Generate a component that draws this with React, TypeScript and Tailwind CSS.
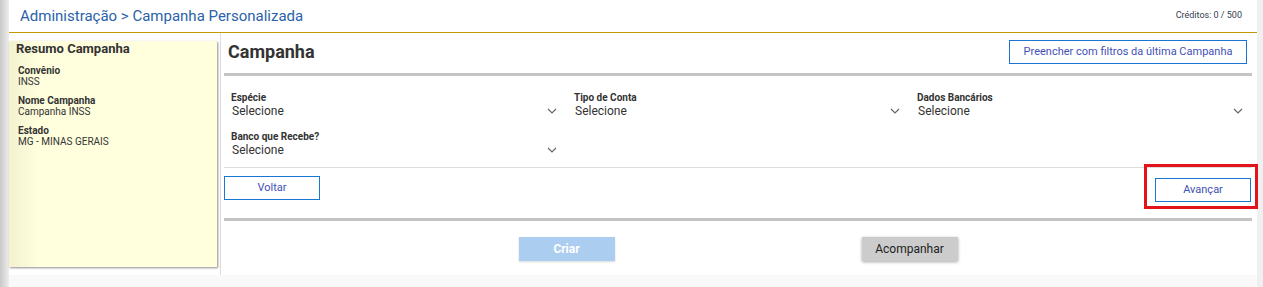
import React from "react";

// campos do filtro da campanha
const fields = [
  { label: "Espécie" },
  { label: "Tipo de Conta" },
  { label: "Dados Bancários" },
  { label: "Banco que Recebe?" },
];

// resumo mostrado no painel amarelo
const resumo = [
  { label: "Convênio", value: "INSS" },
  { label: "Nome Campanha", value: "Campanha INSS" },
  { label: "Estado", value: "MG - MINAS GERAIS" },
];

function Chevron() {
  return (
    <svg width="10" height="6" viewBox="0 0 10 6" className="shrink-0">
      <path d="M1 1l4 4 4-4" fill="none" stroke="#666" strokeWidth="1.2" />
    </svg>
  );
}

export default function App() {
  return (
    <div className="w-[1263px] h-[287px] flex bg-[#f9f9f9] font-['Roboto',sans-serif] text-[#333] overflow-hidden">
      {/* sombra da esquerda */}
      <div className="w-[9px] shrink-0 bg-gradient-to-r from-[#c8c8c8] to-[#eeeeee]" />

      <div className="w-[1248px] shrink-0 flex flex-col">
        <div className="h-[275px] bg-white flex flex-col">
          {/* cabeçalho */}
          <div className="h-[32px] flex items-center justify-between pl-[11px] pr-[15px]">
            <span className="text-[15px] text-[#2a62a8] pt-[1px]">
              Administração &gt; Campanha Personalizada
            </span>
            <span className="text-[9px] text-[#34404e]">Créditos: 0 / 500</span>
          </div>
          <div className="h-px bg-[#c09a00]" />

          <div className="flex flex-1">
            {/* painel resumo */}
            <div className="w-[211px] shrink-0">
              <div className="w-[208px] h-[226px] mt-[8px] bg-[linear-gradient(to_right,#f3f1d0,#ffffdd_30px)] shadow-[1px_1px_2px_rgba(0,0,0,0.45)] pl-[7px]">
                <div className="text-[13px] leading-[15px] font-bold">Resumo Campanha</div>
                <div className="flex flex-col gap-[8px] pl-[2px] mt-[9px]">
                  {resumo.map((r) => (
                    <div key={r.label} className="text-[10px] leading-[11px]">
                      <div className="font-bold">{r.label}</div>
                      <div>{r.value}</div>
                    </div>
                  ))}
                </div>
              </div>
            </div>
            <div className="w-px bg-[#dddddd]" />

            {/* conteúdo principal */}
            <div className="flex-1 flex flex-col pl-[3px] pr-[5px] pt-[7px]">
              <div className="h-[24px] flex items-center justify-between pl-[4px] pr-[5px]">
                <h1 className="text-[18px] leading-[24px] font-bold">Campanha</h1>
                <button className="h-[24px] w-[238px] border border-[#1976d2] text-[11px] text-[#3f51b5]">
                  Preencher com filtros da última Campanha
                </button>
              </div>
              <div className="h-[3px] bg-[#c4c4c4] mt-[9px]" />

              {/* selects */}
              <div className="grid grid-cols-3 gap-x-[15px] gap-y-[12px] pl-[7px] pr-[7px] pt-[16px] pb-[9px]">
                {fields.map((f) => (
                  <div key={f.label} className="flex flex-col">
                    <div className="text-[10px] leading-[11px] font-bold">{f.label}</div>
                    <div className="h-[16px] flex items-center justify-between pl-[1px] pr-[2px]">
                      <span className="text-[12px] leading-[16px]">Selecione</span>
                      <Chevron />
                    </div>
                  </div>
                ))}
              </div>
              <div className="h-px bg-[#dddddd]" />

              {/* navegação */}
              <div className="flex justify-between pt-[8px] pb-[16px]">
                <button className="h-[24px] w-[96px] border border-[#1976d2] text-[11px] text-[#3f51b5]">
                  Voltar
                </button>
                <div className="relative mr-[1px]">
                  <button className="h-[24px] w-[96px] border border-[#1976d2] text-[11px] text-[#3f51b5]">
                    Avançar
                  </button>
                  {/* destaque vermelho */}
                  <span className="absolute -left-[11px] -top-[12px] -right-[7px] -bottom-[7px] border-[3px] border-[#e3131b] pointer-events-none" />
                </div>
              </div>
              <div className="h-[3px] bg-[#c4c4c4]" />

              <div className="flex justify-center gap-[247px] pt-[16px]">
                <button className="h-[24px] w-[96px] bg-[#abcdef] text-white text-[12px] font-bold shadow-[0_1px_2px_rgba(0,0,0,0.15)]">
                  Criar
                </button>
                <button className="h-[24px] w-[96px] bg-[#cccccc] text-[#222] text-[12px] shadow-[0_1px_3px_rgba(0,0,0,0.35)]">
                  Acompanhar
                </button>
              </div>
            </div>
          </div>
        </div>
      </div>

      <div className="flex-1 bg-[#f0f0f0]" />
    </div>
  );
}
